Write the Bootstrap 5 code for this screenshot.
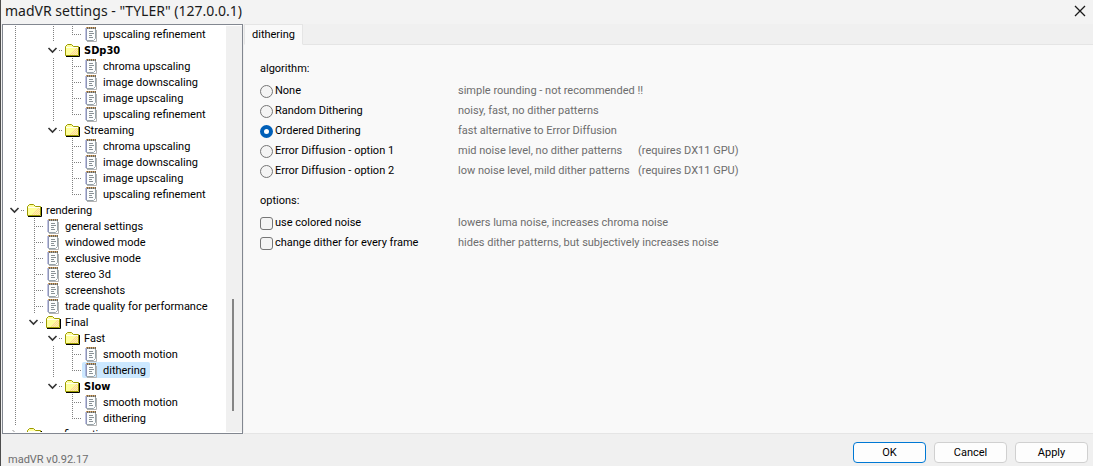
<!DOCTYPE html>
<html lang="en">
<head>
<meta charset="utf-8">
<meta name="viewport" content="width=device-width, initial-scale=1">
<title>madVR settings</title>
<link href="https://cdn.jsdelivr.net/npm/bootstrap@5.3.0/dist/css/bootstrap.min.css" rel="stylesheet">
<script src="https://cdn.jsdelivr.net/npm/bootstrap@5.3.0/dist/js/bootstrap.bundle.min.js"></script>
<style>
  body { font: 11px/16px Roboto, Tahoma, sans-serif; color: #000; background: #f0f0f0; border-left: 1px solid #4d4d4d; }
  .titlebar { height: 24px; padding: 0 5px 2px 4px; background: #f3f3f3; }
  .titlebar h1 { font: 14px/20px "Noto Sans", sans-serif; color: #1a1a1a; }
  .close-btn { width: 16px; height: 20px; }
  .workspace { min-height: 0; }
  .tree-box { width: 241px; margin-left: 1px; padding: 1px 0; border: 1px solid #828790; background: #fff; }
  .tree-view { padding-left: 3px; min-height: 0; }
  .tree-row { height: 16px; white-space: nowrap; }
  .guide { width: 19px; height: 16px; flex: none; }
  .entry { height: 16px; padding: 0 4px 0 1px; gap: 4px; border-radius: 2px; color: #000; line-height: 18px; text-decoration: none; }
  .entry.active { background: #cce8ff; }
  .entry.fw-bold { font-family: "DejaVu Sans Condensed", Tahoma, sans-serif; }
  .scroll-track { width: 16px; background: #f0f0f0; }
  .scroll-thumb { width: 2px; height: 112px; margin: 0 8px 21px auto; background: #858585; }
  .pane { margin-left: 1px; background: #f9f9f9; border-bottom: 1px solid #e5e5e5; }
  .nav-tabs { background: #f0f0f0; border-color: #e5e5e5; --bs-nav-tabs-border-radius: 0; }
  .nav-tabs .nav-link { height: 21px; padding: 2px 7px; color: #000; line-height: 16px; }
  .nav-tabs .nav-link.active { background: #f9f9f9; color: #000; border-color: #e5e5e5 #e5e5e5 #f9f9f9; }
  .settings { padding: 16px; }
  .settings legend { font-size: 11px; line-height: 16px; margin-bottom: 4px; }
  .settings fieldset + fieldset { margin-top: 12px; }
  .option { display: grid; grid-template-columns: 198px 180px auto; justify-content: start; height: 20px; align-items: center; color: #6d6d6d; white-space: nowrap; }
  .option label { color: #000; gap: 2px; }
  .option .form-check-input { width: 13px; height: 13px; margin: 0; border-color: #767676; background-color: #f4f4f4; box-shadow: none; }
  .option .form-check-input[type=checkbox] { border-radius: 3px; }
  .option .form-check-input:checked { background: #fff; border: 4px solid #005fb8; }
  .footer-bar { height: 32px; padding: 8px 5px 0 7px; gap: 8px; }
  .footer-bar .btn { width: 73px; height: 21px; padding: 0; font-size: 11px; line-height: 20px; background: #fdfdfd; border: 1px solid #d0d0d0; border-radius: 4px; color: #000; }
  .footer-bar .btn.default-btn { border-color: #0078d4; }
  .version { color: #6d6d6d; line-height: 12px; }
</style>
</head>
<body class="vh-100 d-flex flex-column overflow-hidden">
<svg width="0" height="0" class="position-absolute" aria-hidden="true">
  <defs>
    <pattern id="dither" width="2" height="2" patternUnits="userSpaceOnUse"><path d="M0 0h1v1H0zM1 1h1v1H1z" fill="#ffcf9c"/></pattern>
    <symbol id="folder" viewBox="0 0 16 16">
      <path d="M1.500 13.500V4.500L3.500 2.500H7.500L9.500 4.500H14.500V13.500Z" fill="#ffff9c" stroke="#9c9a00"/>
      <path d="M6 13V11H8V9H10V7H12V6H14V13Z" fill="url(#dither)"/>
      <path d="M2 5.500H14" stroke="#fffff0"/>
      <path d="M2 14.500H15.500V5" fill="none" stroke="#000"/>
    </symbol>
    <symbol id="page" viewBox="0 0 16 16">
      <path d="M4 15.500H13.500V4" fill="none" stroke="#b4b4b4"/>
      <path d="M3.500 2.500H12.500V12.500L10.500 14.500H3.500Z" fill="#fcfdfd" stroke="#98a4aa"/>
      <path d="M3 2V14" stroke="#8488c4"/>
      <path d="M6 5.500H10M6 7.500H11M6 9.500H9M6 11.500H10" stroke="#8a9296"/>
      <path d="M3 1.500H13" stroke="#e0a860"/>
      <path d="M4.500 1V3M6.500 1V3M8.500 1V3M10.500 1V3M12.500 1V3" stroke="#75654e"/>
    </symbol>
    <symbol id="g-line" viewBox="0 0 19 16"><path d="M9.500 0V16" stroke="#808080" stroke-dasharray="1 1"/></symbol>
    <symbol id="g-tee" viewBox="0 0 19 16"><path d="M9.500 0V16M9 8.500H19" stroke="#808080" stroke-dasharray="1 1"/></symbol>
    <symbol id="g-end" viewBox="0 0 19 16"><path d="M9.500 0V9M9 8.500H19" stroke="#808080" stroke-dasharray="1 1"/></symbol>
    <symbol id="g-open" viewBox="0 0 19 16"><path d="M4.500 6L8.500 10L12.500 6" fill="none" stroke="#333" stroke-width="1.600"/><path d="M17 8.500H18M15 8.500H16" stroke="#808080"/></symbol>
    <symbol id="g-shut" viewBox="0 0 19 16"><path d="M6.500 4L10.500 8L6.500 12" fill="none" stroke="#999"/></symbol>
  </defs>
</svg>

<header class="titlebar d-flex flex-shrink-0 justify-content-between align-items-center">
  <h1 class="m-0">madVR settings - "TYLER" (127.0.0.1)</h1>
  <button type="button" class="close-btn btn p-0 border-0 d-flex align-items-center justify-content-center" aria-label="Close">
    <svg width="12" height="12" viewBox="0 0 12 12"><path d="M1 1L11 11M11 1L1 11" stroke="#1a1a1a" stroke-width="1.300"/></svg>
  </button>
</header>

<main class="workspace d-flex flex-grow-1">
  <nav class="tree-box d-flex flex-shrink-0" aria-label="Settings tree">
    <div class="tree-view flex-grow-1 overflow-hidden" id="tree"></div>
    <div class="scroll-track d-flex flex-column justify-content-end"><div class="scroll-thumb"></div></div>
  </nav>

  <section class="pane flex-grow-1">
    <ul class="nav nav-tabs">
      <li class="nav-item"><a class="nav-link active" href="#dithering">dithering</a></li>
    </ul>
    <form class="settings" id="dithering">
      <fieldset>
        <legend>algorithm:</legend>
        <div class="option"><label class="d-flex align-items-center"><input class="form-check-input" type="radio" name="algorithm">None</label><span>simple rounding - not recommended !!</span></div>
        <div class="option"><label class="d-flex align-items-center"><input class="form-check-input" type="radio" name="algorithm">Random Dithering</label><span>noisy, fast, no dither patterns</span></div>
        <div class="option"><label class="d-flex align-items-center"><input class="form-check-input" type="radio" name="algorithm" checked>Ordered Dithering</label><span>fast alternative to Error Diffusion</span></div>
        <div class="option"><label class="d-flex align-items-center"><input class="form-check-input" type="radio" name="algorithm">Error Diffusion - option 1</label><span>mid noise level, no dither patterns</span><span>(requires DX11 GPU)</span></div>
        <div class="option"><label class="d-flex align-items-center"><input class="form-check-input" type="radio" name="algorithm">Error Diffusion - option 2</label><span>low noise level, mild dither patterns</span><span>(requires DX11 GPU)</span></div>
      </fieldset>
      <fieldset>
        <legend>options:</legend>
        <div class="option"><label class="d-flex align-items-center"><input class="form-check-input" type="checkbox">use colored noise</label><span>lowers luma noise, increases chroma noise</span></div>
        <div class="option"><label class="d-flex align-items-center"><input class="form-check-input" type="checkbox">change dither for every frame</label><span>hides dither patterns, but subjectively increases noise</span></div>
      </fieldset>
    </form>
  </section>
</main>

<footer class="footer-bar d-flex flex-shrink-0 align-items-start">
  <span class="version me-auto align-self-end">madVR v0.92.17</span>
  <button type="button" class="btn default-btn">OK</button>
  <button type="button" class="btn">Cancel</button>
  <button type="button" class="btn">Apply</button>
</footer>

<script>
  // Guides per row: | line, + branch, L last branch, v open node, > closed node, . blank
  const rows = [
    ['|.|L', 'upscaling refinement'],
    ['|.v', 'SDp30', 'bold'],
    ['|.|+', 'chroma upscaling'],
    ['|.|+', 'image downscaling'],
    ['|.|+', 'image upscaling'],
    ['|.|L', 'upscaling refinement'],
    ['|.v', 'Streaming'],
    ['|..+', 'chroma upscaling'],
    ['|..+', 'image downscaling'],
    ['|..+', 'image upscaling'],
    ['|..L', 'upscaling refinement'],
    ['v', 'rendering'],
    ['|+', 'general settings'],
    ['|+', 'windowed mode'],
    ['|+', 'exclusive mode'],
    ['|+', 'stereo 3d'],
    ['|+', 'screenshots'],
    ['|+', 'trade quality for performance'],
    ['|v', 'Final'],
    ['|.v', 'Fast'],
    ['|.|+', 'smooth motion'],
    ['|.|L', 'dithering', 'active'],
    ['|.v', 'Slow', 'bold'],
    ['|..+', 'smooth motion'],
    ['|..L', 'dithering'],
    ['>', 'configuration']
  ];
  const guides = { '|': 'line', '+': 'tee', 'L': 'end', 'v': 'open', '>': 'shut' };
  document.getElementById('tree').innerHTML = rows.map(([cells, label, state]) => {
    const lead = [...cells].map(c => `<svg class="guide">${guides[c] ? `<use href="#g-${guides[c]}"/>` : ''}</svg>`).join('');
    const icon = /[v>]$/.test(cells) ? 'folder' : 'page';
    const cls = state === 'bold' ? 'fw-bold' : state || '';
    return `<div class="tree-row d-flex">${lead}<a href="#dithering" class="entry d-flex ${cls}"><svg width="16" height="16"><use href="#${icon}"/></svg>${label}</a></div>`;
  }).join('');
</script>
</body>
</html>
